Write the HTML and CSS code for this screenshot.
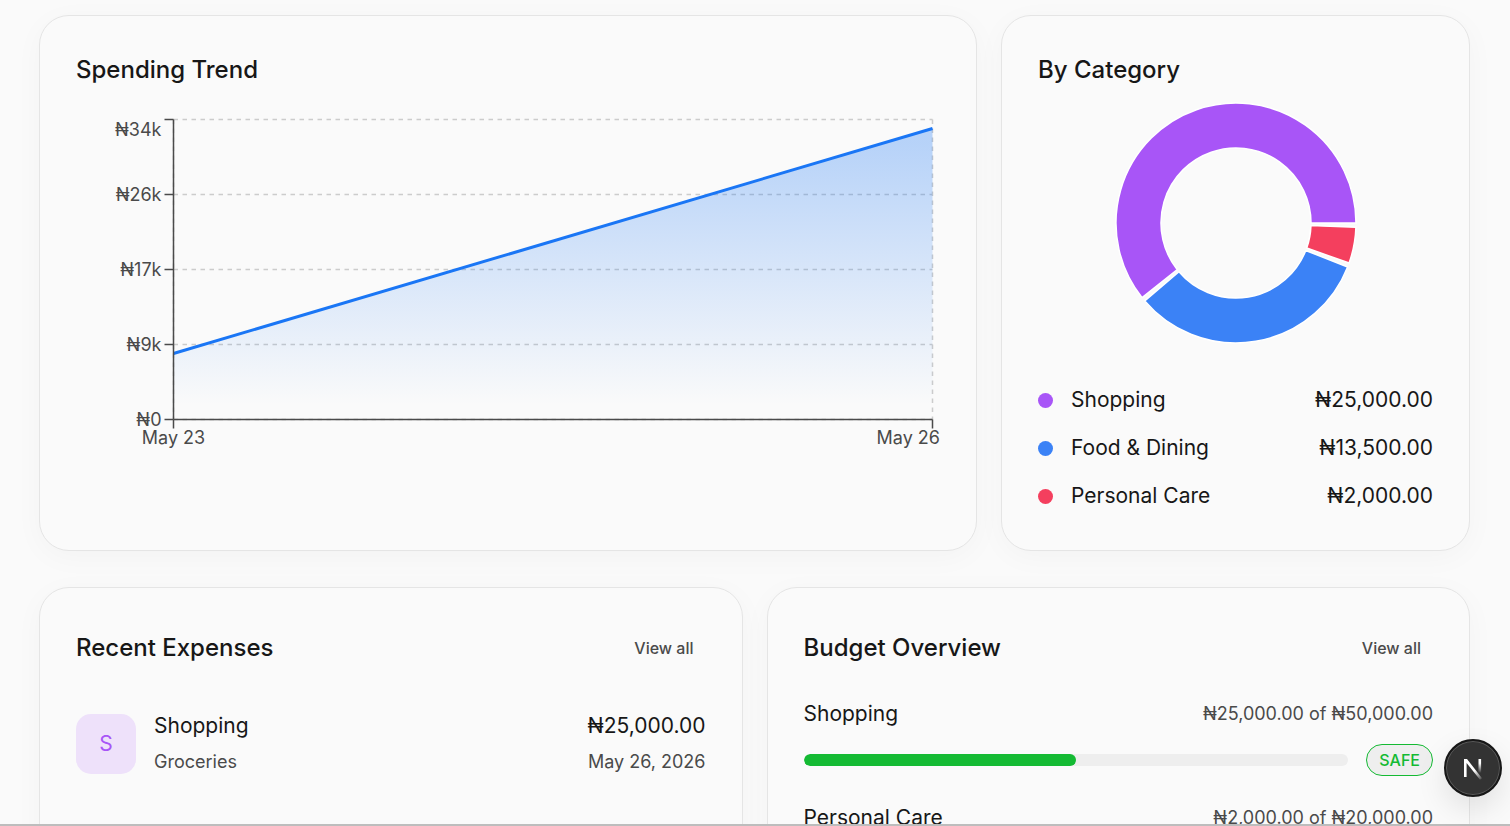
FILE: index.html
```
<!DOCTYPE html>
<html lang="en">
<head>
    <meta charset="UTF-8">
    <meta name="viewport" content="width=device-width, initial-scale=1.0">
    <title>Dashboard</title>
    <link rel="stylesheet" href="styles.css">
</head>
<body>
    <main class="dashboard">
        <div class="row row-charts">
            <!-- Spending trend -->
            <section class="card">
                <h2 class="card-title">Spending Trend</h2>
                <svg class="trend-chart" viewBox="0 0 576 240" role="img" aria-label="Spending trend">
                    <defs>
                        <linearGradient id="trendFill" x1="0" y1="0" x2="0" y2="1">
                            <stop offset="5%" stop-color="#1a76f5" stop-opacity="0.3"/>
                            <stop offset="95%" stop-color="#1a76f5" stop-opacity="0"/>
                        </linearGradient>
                    </defs>
                    <g class="grid">
                        <path d="M65 5H571M65 55H571M65 105H571M65 155H571M65 205H571"/>
                        <path d="M65 5V205M571 5V205"/>
                    </g>
                    <path d="M65 161L571 11V205H65Z" fill="url(#trendFill)"/>
                    <path class="trend-line" d="M65 161L571 11"/>
                    <path class="axis" d="M65 5V205M65 205H571"/>
                    <path class="axis" d="M59 5H65M59 55H65M59 105H65M59 155H65M59 205H65M65 205V211M571 205V211"/>
                    <g class="tick-labels" text-anchor="end">
                        <text x="57" y="16">₦34k</text>
                        <text x="57" y="59">₦26k</text>
                        <text x="57" y="109">₦17k</text>
                        <text x="57" y="159">₦9k</text>
                        <text x="57" y="209">₦0</text>
                        <text x="576" y="221">May 26</text>
                        <text x="65" y="221" text-anchor="middle">May 23</text>
                    </g>
                </svg>
            </section>

            <!-- Category breakdown -->
            <section class="card">
                <h2 class="card-title">By Category</h2>
                <svg class="donut" viewBox="0 0 180 180" role="img" aria-label="Spending by category">
                    <path class="shopping" d="M170 90A80 80 0 1 0 27.39 139.8L50.87 121.13A50 50 0 1 1 140 90Z"/>
                    <path class="food" d="M29.17 141.96A80 80 0 0 0 164.43 119.32L136.52 108.33A50 50 0 0 1 51.98 122.47Z"/>
                    <path class="care" d="M165.41 116.7A80 80 0 0 0 169.95 92.79L139.97 91.75A50 50 0 0 1 137.13 106.69Z"/>
                </svg>
                <ul class="legend">
                    <li><span class="dot shopping"></span><span>Shopping</span><span class="amount">₦25,000.00</span></li>
                    <li><span class="dot food"></span><span>Food &amp; Dining</span><span class="amount">₦13,500.00</span></li>
                    <li><span class="dot care"></span><span>Personal Care</span><span class="amount">₦2,000.00</span></li>
                </ul>
            </section>
        </div>

        <div class="row row-lists">
            <!-- Recent expenses -->
            <section class="card">
                <div class="card-header">
                    <h2 class="card-title">Recent Expenses</h2>
                    <a class="view-all" href="#">View all</a>
                </div>
                <div class="expense">
                    <div class="avatar">S</div>
                    <div>
                        <p>Shopping</p>
                        <p class="muted">Groceries</p>
                    </div>
                    <div class="expense-right">
                        <p>₦25,000.00</p>
                        <p class="muted">May 26, 2026</p>
                    </div>
                </div>
            </section>

            <!-- Budgets -->
            <section class="card">
                <div class="card-header">
                    <h2 class="card-title">Budget Overview</h2>
                    <a class="view-all" href="#">View all</a>
                </div>
                <div class="budgets">
                    <div class="budget">
                        <div class="budget-head">
                            <span>Shopping</span>
                            <span class="muted">₦25,000.00 of ₦50,000.00</span>
                        </div>
                        <div class="budget-progress">
                            <div class="bar"><div class="bar-fill" style="width: 50%"></div></div>
                            <span class="badge">SAFE</span>
                        </div>
                    </div>
                    <div class="budget">
                        <div class="budget-head">
                            <span>Personal Care</span>
                            <span class="muted">₦2,000.00 of ₦20,000.00</span>
                        </div>
                    </div>
                </div>
            </section>
        </div>
    </main>

    <button class="dev-button" type="button" aria-label="Open dev tools">
        <svg width="24" height="24" viewBox="0 0 24 24" fill="none">
            <defs>
                <linearGradient id="stemFade" gradientUnits="userSpaceOnUse" x1="0" y1="3" x2="0" y2="17">
                    <stop offset="0.3" stop-color="#fff"/>
                    <stop offset="1" stop-color="#fff" stop-opacity="0"/>
                </linearGradient>
                <linearGradient id="slashFade" gradientUnits="userSpaceOnUse" x1="13" y1="15" x2="21" y2="25">
                    <stop stop-color="#fff"/>
                    <stop offset="1" stop-color="#fff" stop-opacity="0"/>
                </linearGradient>
            </defs>
            <rect x="17.5" y="3" width="2.6" height="14" fill="url(#stemFade)"/>
            <path d="M3 21V3H6L21 22.3L19 23.8L5.6 7V21Z" fill="url(#slashFade)"/>
        </svg>
    </button>
</body>
</html>
```

FILE: styles.css
```
* {
    margin: 0;
    padding: 0;
    box-sizing: border-box;
}

body {
    height: 100vh;
    overflow: hidden;
    background: #fafafa;
    border-bottom: 2px solid #bdbdbd;
    color: #171717;
    font-family: Inter, 'Liberation Sans', sans-serif;
    font-size: 21px;
    line-height: 36px;
}

.dashboard {
    display: flex;
    flex-direction: column;
    gap: 36px;
    padding: 15px 40px 36px 39px;
}

.row {
    display: grid;
    gap: 24px;
}

.row-charts {
    grid-template-columns: 2fr 1fr;
}

.row-lists {
    grid-template-columns: 1fr 1fr;
}

/* Cards */
.card {
    min-width: 0;
    padding: 36px;
    background: #fafafa;
    border: 1px solid #e5e5e5;
    border-radius: 30px;
    box-shadow: 0 6px 30px rgba(0, 0, 0, 0.03);
}

.card-title {
    font-size: 24px;
    font-weight: 500;
    line-height: 36px;
}

.card-header {
    display: flex;
    align-items: center;
    justify-content: space-between;
    height: 48px;
    margin-bottom: 24px;
}

.view-all {
    padding: 0 12px;
    color: #4a4a4a;
    font-size: 16px;
    font-weight: 500;
    text-decoration: none;
}

.view-all:hover {
    color: #171717;
}

.muted {
    color: #4a4a4a;
    font-size: 18px;
}

/* Trend chart */
.trend-chart {
    display: block;
    width: 100%;
    margin-top: 24px;
}

.grid path {
    fill: none;
    stroke: #ccc;
    stroke-dasharray: 3 3;
}

.axis {
    fill: none;
    stroke: #4a4a4a;
}

.trend-line {
    fill: none;
    stroke: #1a76f5;
    stroke-width: 2;
}

.tick-labels {
    fill: #4a4a4a;
    font-size: 12px;
}

/* Donut and legend */
.donut {
    display: block;
    width: 270px;
    height: 270px;
    margin: 0 auto 24px;
}

.donut path {
    stroke: #fff;
}

.shopping {
    background: #a855f7;
    fill: #a855f7;
}

.food {
    background: #3b82f6;
    fill: #3b82f6;
}

.care {
    background: #f43f5e;
    fill: #f43f5e;
}

.legend {
    display: flex;
    flex-direction: column;
    gap: 12px;
    list-style: none;
}

.legend li {
    display: flex;
    align-items: center;
    gap: 18px;
}

.legend .amount {
    margin-left: auto;
}

.dot {
    width: 15px;
    height: 15px;
    border-radius: 50%;
}

/* Recent expenses */
.expense {
    display: flex;
    align-items: center;
    gap: 18px;
    padding: 12px 0;
}

.expense-right {
    margin-left: auto;
    text-align: right;
}

.avatar {
    display: flex;
    align-items: center;
    justify-content: center;
    width: 60px;
    height: 60px;
    border-radius: 15px;
    background: #eee1fa;
    color: #a855f7;
}

/* Budgets */
.budgets {
    display: flex;
    flex-direction: column;
    gap: 24px;
}

.budget-head {
    display: flex;
    justify-content: space-between;
}

.budget-progress {
    display: flex;
    align-items: center;
    gap: 18px;
    margin-top: 12px;
}

.bar {
    flex: 1;
    height: 12px;
    border-radius: 6px;
    background: #eee;
    overflow: hidden;
}

.bar-fill {
    height: 100%;
    border-radius: 6px;
    background: #14ba33;
}

.badge {
    padding: 0 12px;
    border: 1px solid #14ba33;
    border-radius: 16px;
    background: #eee;
    color: #14ba33;
    font-size: 16px;
    font-weight: 500;
    line-height: 30px;
}

/* Floating button */
.dev-button {
    position: fixed;
    right: 8px;
    bottom: 29px;
    display: flex;
    align-items: center;
    justify-content: center;
    width: 58px;
    height: 58px;
    border: 2px solid #171717;
    border-radius: 50%;
    background: #333;
    box-shadow: inset 0 0 0 1px #5a5a5a, 0 12px 30px rgba(0, 0, 0, 0.1);
    cursor: pointer;
}
```
